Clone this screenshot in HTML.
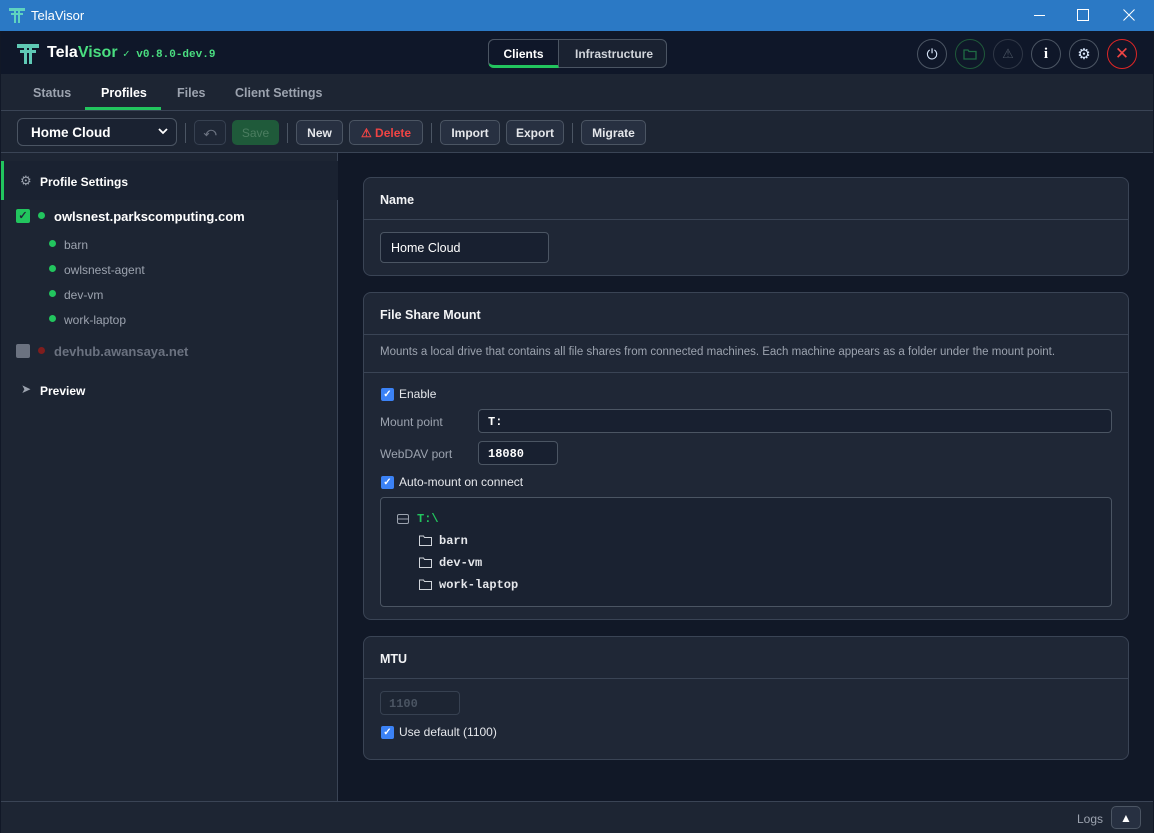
<!DOCTYPE html><html><head><style>
*{box-sizing:border-box;margin:0;padding:0}
body{width:1154px;height:833px;overflow:hidden;background:#111827;font-family:"Liberation Sans",sans-serif;color:#e5e7eb;position:relative;font-size:12px}
.abs{position:absolute}
.mono{font-family:"Liberation Mono",monospace;font-weight:bold}
.btn{position:absolute;top:120px;height:25px;border:1px solid #4b5563;border-radius:5px;background:#273041;color:#e5e7eb;font-weight:bold;font-size:12px;display:flex;align-items:center;justify-content:center}
.sep{position:absolute;top:123px;width:1px;height:20px;background:#4b5563}
.circ{position:absolute;top:39px;width:30px;height:30px;border-radius:50%;border:1.5px solid #4b5563;display:flex;align-items:center;justify-content:center}
.card{position:absolute;left:363px;width:766px;background:#1f2736;border:1px solid #3a4455;border-radius:8px}
.ch{height:42px;border-bottom:1px solid #3a4455;padding:15px 16px 0;font-weight:bold;font-size:12.5px;color:#f3f4f6}
.cb{position:absolute;width:13px;height:13px;background:#3b82f6;border-radius:2px;color:#fff;font-size:10px;line-height:13px;text-align:center;font-weight:bold}
.lbl{position:absolute;font-size:12px}
.inp{position:absolute;background:#182030;border:1px solid #4b5563;border-radius:4px}
.dot{position:absolute;width:7px;height:7px;border-radius:50%;background:#22c55e}
</style></head><body>
<div class="abs" style="left:0;top:0;width:1154px;height:31px;background:#2b79c5"></div>
<svg class="abs" style="left:8px;top:7px" width="18" height="17"><g fill="#5fd3c0"><rect x="1" y="1" width="16" height="3"/><rect x="3" y="6" width="12" height="2"/><rect x="6" y="1" width="2" height="15"/><rect x="10" y="1" width="2" height="15"/></g></svg>
<div class="abs" style="left:31px;top:8px;color:#fff;font-size:13px">TelaVisor</div>
<div class="abs" style="left:1077px;top:9px;width:12px;height:12px;border:1px solid #fff"></div>
<div class="abs" style="left:1034px;top:15px;width:11px;height:1px;background:#fff"></div>
<svg class="abs" style="left:1123px;top:9px" width="12" height="12"><path d="M0.5 0.5L11.5 11.5M11.5 0.5L0.5 11.5" stroke="#fff"/></svg>
<div class="abs" style="left:1px;top:31px;width:1152px;height:43px;background:#0f1729"></div>
<svg class="abs" style="left:16px;top:42px" width="24" height="22"><g fill="#5fc9b5"><rect x="1" y="2" width="22" height="4"/><rect x="4" y="8" width="16" height="3"/><rect x="8" y="2" width="3" height="20"/><rect x="13" y="2" width="3" height="20"/></g></svg>
<div class="abs" style="left:47px;top:44px;font-size:16px;font-weight:bold;color:#fff">Tela<span style="color:#4ade80">Visor</span></div>
<div class="abs mono" style="left:123px;top:47px;font-size:11px;color:#4ade80">✓ v0.8.0-dev.9</div>
<div class="abs" style="left:488px;top:39px;width:179px;height:29px;border:1px solid #4b5563;border-radius:6px;background:#1a2231"></div>
<div class="abs" style="left:488px;top:39px;width:71px;height:29px;border:1px solid #4b5563;border-bottom:3px solid #22c55e;border-radius:6px 0 0 6px;background:#0f1729;font-weight:bold;color:#fff;text-align:center;padding-top:7px">Clients</div>
<div class="abs" style="left:575px;top:47px;font-weight:bold;color:#d1d5db">Infrastructure</div>
<div class="circ" style="left:917px;color:#dbeafe;font-size:14px">⏻</div>
<div class="circ" style="left:955px;border-color:#1f5a3a"><svg width="14" height="12"><path d="M1 2h4l1 1.5h7v7.5h-12z" fill="none" stroke="#1f6b44" stroke-width="1.3"/></svg></div>
<div class="circ" style="left:993px;border-color:#2f3746;color:#4b5563;font-size:13px">⚠</div>
<div class="circ" style="left:1031px;color:#fff;font-weight:bold;font-family:'Liberation Serif',serif;font-size:15px">i</div>
<div class="circ" style="left:1069px;color:#dbeafe;font-size:15px">⚙</div>
<div class="circ" style="left:1107px;border-color:#dc2626;color:#ef4444;font-size:17px">✕</div>
<div class="abs" style="left:1px;top:74px;width:1152px;height:78px;background:#1d2533"></div>
<div class="abs" style="left:1px;top:110px;width:1152px;height:1px;background:#3a4455"></div>
<div class="abs" style="left:1px;top:152px;width:1152px;height:1px;background:#3a4455"></div>
<div class="abs" style="left:33px;top:86px;font-weight:bold;color:#9ca3af;font-size:12.5px">Status</div>
<div class="abs" style="left:101px;top:86px;font-weight:bold;color:#fff;font-size:12.5px">Profiles</div>
<div class="abs" style="left:85px;top:107px;width:76px;height:3px;background:#22c55e"></div>
<div class="abs" style="left:177px;top:86px;font-weight:bold;color:#9ca3af;font-size:12.5px">Files</div>
<div class="abs" style="left:235px;top:86px;font-weight:bold;color:#9ca3af;font-size:12.5px">Client Settings</div>
<div class="abs" style="left:17px;top:118px;width:160px;height:28px;border:1px solid #4b5563;border-radius:6px;background:#1a2231;padding:6px 0 0 13px;font-weight:bold;font-size:13.5px;color:#fff">Home Cloud<svg style="position:absolute;right:8px;top:9px" width="10" height="7"><path d="M1 1l4 4 4-4" fill="none" stroke="#fff" stroke-width="1.8"/></svg></div>
<div class="sep" style="left:185px"></div>
<div class="btn" style="left:194px;width:32px;color:#6b7280;background:#1f2736;border-color:#374151">⤺</div>
<div class="btn" style="left:232px;width:47px;background:#1f5a3a;border-color:#1f5a3a;color:#4b7d60;font-weight:normal">Save</div>
<div class="sep" style="left:287px"></div>
<div class="btn" style="left:296px;width:47px">New</div>
<div class="btn" style="left:349px;width:74px;color:#ef4444">⚠ Delete</div>
<div class="sep" style="left:431px"></div>
<div class="btn" style="left:440px;width:60px">Import</div>
<div class="btn" style="left:506px;width:58px">Export</div>
<div class="sep" style="left:572px"></div>
<div class="btn" style="left:581px;width:65px">Migrate</div>
<div class="abs" style="left:1px;top:153px;width:337px;height:648px;background:#1d2533;border-right:1px solid #3a4455"></div>
<div class="abs" style="left:1px;top:161px;width:337px;height:39px;background:#1a2231;border-left:3px solid #22c55e"></div>
<div class="abs" style="left:20px;top:173px;color:#9ca3af;font-size:13px">⚙</div>
<div class="abs" style="left:40px;top:175px;font-weight:bold;color:#fff">Profile Settings</div>
<div class="abs" style="left:16px;top:209px;width:14px;height:14px;background:#22c55e;border-radius:2px;color:#1f2937;font-size:11px;text-align:center;line-height:14px;font-weight:bold">✓</div>
<div class="dot" style="left:38px;top:212px"></div>
<div class="abs" style="left:54px;top:209px;font-weight:bold;font-size:13px;color:#fff">owlsnest.parkscomputing.com</div>
<div class="dot" style="left:49px;top:240px"></div><div class="abs" style="left:64px;top:238px;color:#9ca3af">barn</div>
<div class="dot" style="left:49px;top:265px"></div><div class="abs" style="left:64px;top:263px;color:#9ca3af">owlsnest-agent</div>
<div class="dot" style="left:49px;top:290px"></div><div class="abs" style="left:64px;top:288px;color:#9ca3af">dev-vm</div>
<div class="dot" style="left:49px;top:315px"></div><div class="abs" style="left:64px;top:313px;color:#9ca3af">work-laptop</div>
<div class="abs" style="left:16px;top:344px;width:14px;height:14px;background:#6b7280;border-radius:2px"></div>
<div class="dot" style="left:38px;top:347px;background:#7f1d1d"></div>
<div class="abs" style="left:54px;top:344px;font-weight:bold;font-size:13px;color:#6b7280">devhub.awansaya.net</div>
<div class="abs" style="left:21px;top:382px;color:#9ca3af">➤</div>
<div class="abs" style="left:40px;top:384px;font-weight:bold;color:#fff">Preview</div>
<div class="card" style="top:177px;height:99px"><div class="ch">Name</div>
<div class="inp" style="left:16px;top:54px;width:169px;height:31px;padding:8px 10px;color:#fff;font-size:12.5px">Home Cloud</div></div>
<div class="card" style="top:292px;height:328px"><div class="ch">File Share Mount</div>
<div class="abs" style="left:0;top:42px;width:764px;height:38px;border-bottom:1px solid #3a4455;padding:11px 16px;color:#9ca3af;font-size:11.5px">Mounts a local drive that contains all file shares from connected machines. Each machine appears as a folder under the mount point.</div>
<div class="cb" style="left:17px;top:95px">✓</div><div class="lbl" style="left:35px;top:94px">Enable</div>
<div class="lbl" style="left:16px;top:122px;color:#9ca3af">Mount point</div>
<div class="inp" style="left:114px;top:116px;width:634px;height:24px;padding:4px 9px" ><span class="mono" style="font-size:12px;color:#fff">T:</span></div>
<div class="lbl" style="left:16px;top:154px;color:#9ca3af">WebDAV port</div>
<div class="inp" style="left:114px;top:148px;width:80px;height:24px;padding:4px 9px"><span class="mono" style="font-size:12px;color:#fff">18080</span></div>
<div class="cb" style="left:17px;top:183px">✓</div><div class="lbl" style="left:35px;top:182px">Auto-mount on connect</div>
<div class="abs" style="left:16px;top:204px;width:732px;height:110px;border:1px solid #4b5563;border-radius:4px;background:#1a2231">
<svg class="abs" style="left:16px;top:16px" width="12" height="10"><rect x="0.5" y="0.5" width="11" height="9" rx="1.5" fill="none" stroke="#9ca3af"/><line x1="0.5" y1="5" x2="11.5" y2="5" stroke="#9ca3af"/></svg>
<div class="abs mono" style="left:36px;top:14px;color:#22c55e;font-size:12px">T:\</div>
<svg class="abs" style="left:38px;top:37px" width="13" height="11"><path d="M0.5 1h4l1 1.5h7v8h-12z" fill="none" stroke="#d1d5db"/></svg>
<div class="abs mono" style="left:58px;top:36px;font-size:12px;color:#e5e7eb">barn</div>
<svg class="abs" style="left:38px;top:59px" width="13" height="11"><path d="M0.5 1h4l1 1.5h7v8h-12z" fill="none" stroke="#d1d5db"/></svg>
<div class="abs mono" style="left:58px;top:58px;font-size:12px;color:#e5e7eb">dev-vm</div>
<svg class="abs" style="left:38px;top:81px" width="13" height="11"><path d="M0.5 1h4l1 1.5h7v8h-12z" fill="none" stroke="#d1d5db"/></svg>
<div class="abs mono" style="left:58px;top:80px;font-size:12px;color:#e5e7eb">work-laptop</div>
</div></div>
<div class="card" style="top:636px;height:124px"><div class="ch">MTU</div>
<div class="inp" style="left:16px;top:54px;width:80px;height:24px;padding:4px 8px;border-color:#374151;background:#1d2533"><span class="mono" style="font-size:12px;color:#4b5563">1100</span></div>
<div class="cb" style="left:17px;top:89px">✓</div><div class="lbl" style="left:35px;top:88px">Use default (1100)</div></div>
<div class="abs" style="left:1px;top:801px;width:1152px;height:32px;background:#1d2533;border-top:1px solid #3a4455"></div>
<div class="abs" style="left:1077px;top:812px;color:#9ca3af">Logs</div>
<div class="abs" style="left:1111px;top:806px;width:30px;height:23px;border:1px solid #4b5563;border-radius:5px;background:#273041;color:#fff;text-align:center;font-size:12px;padding-top:4px">▲</div>
</body></html>
